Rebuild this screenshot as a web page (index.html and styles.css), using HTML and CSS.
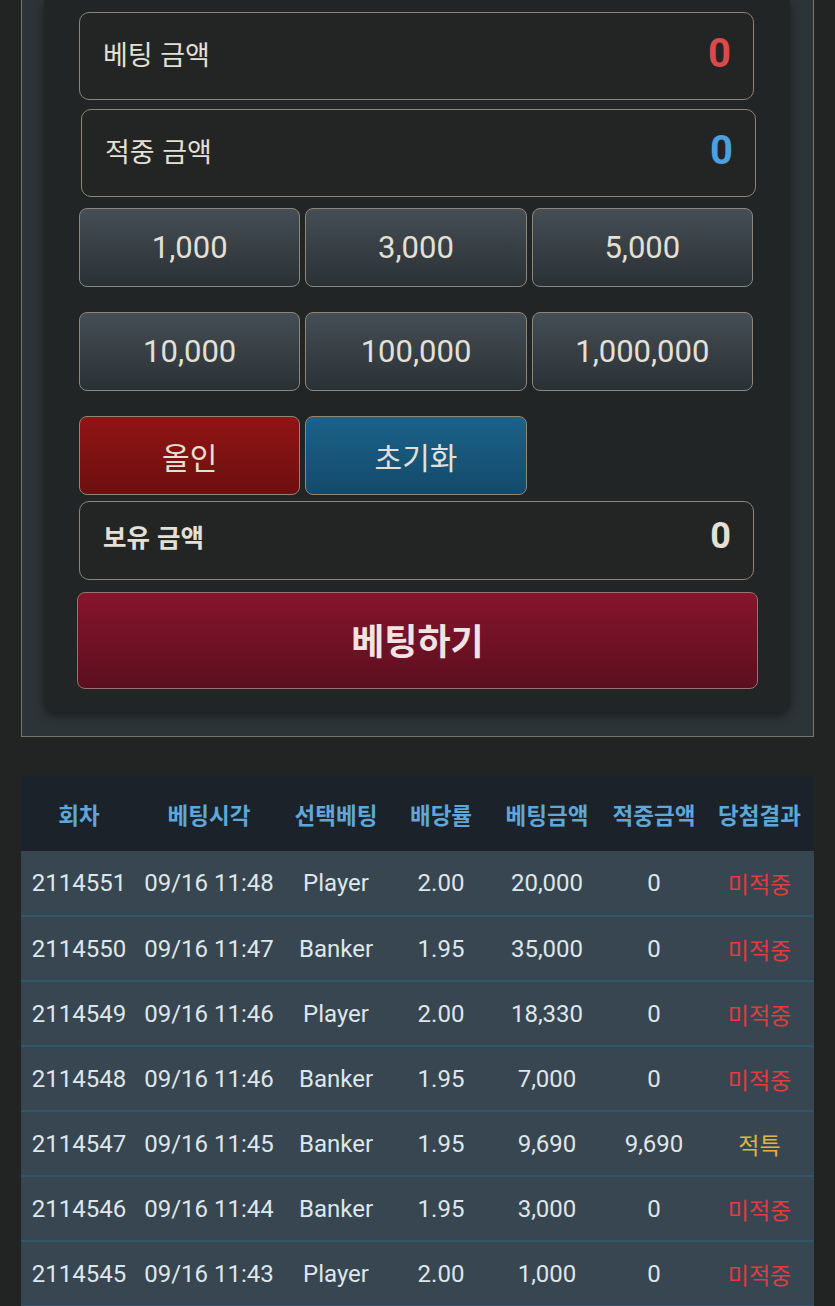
FILE: index.html
```html
<!DOCTYPE html>
<html lang="ko">
<head>
<meta charset="utf-8">
<title>베팅</title>
<link rel="stylesheet" href="styles.css">
</head>
<body>
<div class="panel">
  <div class="card">
    <div class="field">
      <span class="label">베팅 금액</span>
      <span class="value red">0</span>
    </div>
    <div class="field shift">
      <span class="label">적중 금액</span>
      <span class="value blue">0</span>
    </div>
    <div class="grid first">
      <button class="chip">1,000</button>
      <button class="chip">3,000</button>
      <button class="chip">5,000</button>
    </div>
    <div class="grid">
      <button class="chip">10,000</button>
      <button class="chip">100,000</button>
      <button class="chip">1,000,000</button>
    </div>
    <div class="grid">
      <button class="chip allin">올인</button>
      <button class="chip reset">초기화</button>
    </div>
    <div class="field hold">
      <span class="label bold">보유 금액</span>
      <span class="value light">0</span>
    </div>
    <button class="bet">베팅하기</button>
  </div>
</div>

<table class="history">
  <colgroup>
    <col class="c1"><col class="c2"><col class="c3"><col class="c4"><col class="c5"><col class="c6"><col class="c7">
  </colgroup>
  <thead>
    <tr><th>회차</th><th>베팅시각</th><th>선택베팅</th><th>배당률</th><th>베팅금액</th><th>적중금액</th><th>당첨결과</th></tr>
  </thead>
  <tbody>
    <tr><td>2114551</td><td>09/16 11:48</td><td>Player</td><td>2.00</td><td>20,000</td><td>0</td><td class="lose">미적중</td></tr>
    <tr><td>2114550</td><td>09/16 11:47</td><td>Banker</td><td>1.95</td><td>35,000</td><td>0</td><td class="lose">미적중</td></tr>
    <tr><td>2114549</td><td>09/16 11:46</td><td>Player</td><td>2.00</td><td>18,330</td><td>0</td><td class="lose">미적중</td></tr>
    <tr><td>2114548</td><td>09/16 11:46</td><td>Banker</td><td>1.95</td><td>7,000</td><td>0</td><td class="lose">미적중</td></tr>
    <tr><td>2114547</td><td>09/16 11:45</td><td>Banker</td><td>1.95</td><td>9,690</td><td>9,690</td><td class="tie">적특</td></tr>
    <tr><td>2114546</td><td>09/16 11:44</td><td>Banker</td><td>1.95</td><td>3,000</td><td>0</td><td class="lose">미적중</td></tr>
    <tr><td>2114545</td><td>09/16 11:43</td><td>Player</td><td>2.00</td><td>1,000</td><td>0</td><td class="lose">미적중</td></tr>
  </tbody>
</table>
</body>
</html>
```
FILE: styles.css
```css
* { box-sizing: border-box; }
html, body { margin: 0; padding: 0; }
body {
  background: #222424;
  font-family: Roboto, "Noto Sans CJK KR", sans-serif;
  color: #e2ded3;
  overflow: hidden;
}
.panel {
  margin: 0 21px 0 21px;
  background: #2d3437;
  border: 1px solid #77756c;
  border-top: none;
  padding: 0 23px 24px 22px;
}
.card {
  background: #212526;
  border-radius: 0 0 12px 12px;
  box-shadow: 0 4px 10px rgba(0,0,0,0.45);
  padding: 12px 36px 23px 35px;
  display: flex;
  flex-direction: column;
}
.field {
  height: 88px;
  border: 1px solid #8a8578;
  border-radius: 10px;
  background: #232525;
  display: flex;
  align-items: center;
  justify-content: space-between;
  padding: 0 22px 6px 23px;
}
.field.shift { margin: 9px -2px 0 2px; }
.field.hold { height: 79px; margin-top: 6px; padding-bottom: 10px; }
.label {
  font-family: "Noto Sans CJK KR", sans-serif;
  font-size: 27px;
  color: #e4e0d6;
}
.label.bold { font-weight: 700; font-size: 25.5px; }
.value {
  font-family: Roboto, sans-serif;
  font-weight: 700;
  font-size: 40px;
}
.value.red { color: #d94a4a; }
.value.blue { color: #4d9fe0; }
.value.light { color: #e6e1d4; font-size: 36px; }
.grid {
  display: grid;
  grid-template-columns: repeat(3, 1fr);
  gap: 5px;
  margin: 25px 1px 0 0;
}
.grid.first { margin-top: 11px; }
.chip {
  height: 79px;
  border: 1px solid #8c8777;
  border-radius: 8px;
  background: linear-gradient(#454e55, #2a3136);
  color: #e4e0d6;
  font-family: Roboto, "Noto Sans CJK KR", sans-serif;
  font-size: 31px;
  padding: 0;
}
.chip.allin {
  background: linear-gradient(#921414, #6d0f10);
  font-family: "Noto Sans CJK KR", sans-serif;
  font-size: 30px;
}
.chip.reset {
  background: linear-gradient(#1c6289, #134a6b);
  font-family: "Noto Sans CJK KR", sans-serif;
  font-size: 30px;
}
.bet {
  margin: 12px -4px 0 -2px;
  height: 97px;
  border: 1px solid #9a7070;
  border-radius: 8px;
  background: linear-gradient(#86142c, #5c0f1f);
  color: #f1e3e3;
  font-family: "Noto Sans CJK KR", sans-serif;
  font-weight: 700;
  font-size: 36px;
  padding: 0 0 4px 0;
}
.history {
  margin: 39px 21px 0 21px;
  width: 793px;
  border-collapse: collapse;
  table-layout: fixed;
}
.c1 { width: 116px; }
.c2 { width: 144px; }
.c3 { width: 110px; }
.c4 { width: 100px; }
.c5 { width: 112px; }
.c6 { width: 102px; }
.c7 { width: 109px; }
.history th {
  background: #1b2229;
  height: 75px;
  color: #5ea7d8;
  font-family: "Noto Sans CJK KR", sans-serif;
  font-weight: 700;
  font-size: 22.5px;
  padding: 0;
  white-space: nowrap;
}
.history td {
  background: #374650;
  height: 65px;
  border-bottom: 2px solid #30566a;
  text-align: center;
  color: #dfe6ea;
  font-size: 24px;
  padding: 0;
  white-space: nowrap;
}
.history td.lose {
  color: #e23b41;
  font-family: "Noto Sans CJK KR", sans-serif;
  font-size: 23px;
}
.history td.tie {
  color: #e2b243;
  font-family: "Noto Sans CJK KR", sans-serif;
  font-size: 23px;
}
```
